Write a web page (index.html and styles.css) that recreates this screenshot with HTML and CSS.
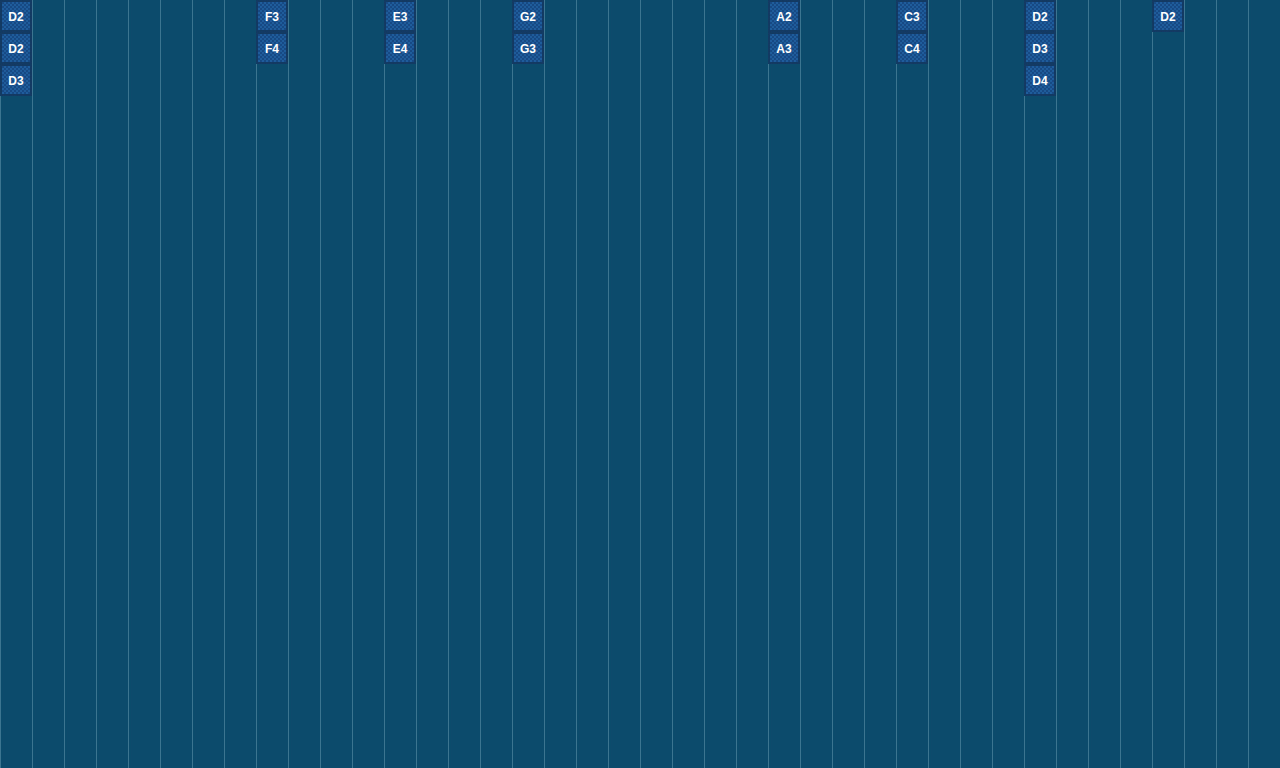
FILE: index.html
```html
<!DOCTYPE html>
<html lang="en">
<head>
    <meta charset="UTF-8">
    <meta name="viewport" content="width=device-width, initial-scale=1.0">
    <title>Step Sequencer</title>
    <link rel="stylesheet" href="styles.css">
</head>
<body>
    <main id="sequencer" class="sequencer">
        <!-- Columns are built by the script below -->
    </main>

    <script>
        // Notes for each step, keyed by column index
        const steps = {
            0: ['D2', 'D2', 'D3'],
            8: ['F3', 'F4'],
            12: ['E3', 'E4'],
            16: ['G2', 'G3'],
            24: ['A2', 'A3'],
            28: ['C3', 'C4'],
            32: ['D2', 'D3', 'D4'],
            36: ['D2']
        };

        const sequencer = document.getElementById('sequencer');

        for (let i = 0; i < 40; i++) {
            const column = document.createElement('div');
            column.className = 'step';
            (steps[i] || []).forEach(note => {
                column.insertAdjacentHTML('beforeend', `<div class="note">${note}</div>`);
            });
            sequencer.appendChild(column);
        }
    </script>
</body>
</html>
```

FILE: styles.css
```css
body {
    margin: 0;
    padding: 0;
    background-color: #0d4b6c;
    font-family: 'Liberation Sans', Arial, sans-serif;
    overflow: hidden;
}

.sequencer {
    display: grid;
    grid-template-columns: repeat(40, 32px);
    height: 768px;
}

.step {
    display: flex;
    flex-direction: column;
    border-left: 1px solid #3b7590; /* faint step divider */
}

/* note blocks sit over the divider line */
.note {
    width: 32px;
    height: 32px;
    margin-left: -1px;
    padding-top: 1px;
    box-sizing: border-box;
    border: 2px solid #123a63;
    background-color: #1b5490;
    background-image: repeating-conic-gradient(#1f5c9c 0 25%, #174a84 0 50%);
    background-size: 4px 4px;
    color: #ffffff;
    font-size: 12px;
    font-weight: 600;
    display: flex;
    align-items: center;
    justify-content: center;
}
```
